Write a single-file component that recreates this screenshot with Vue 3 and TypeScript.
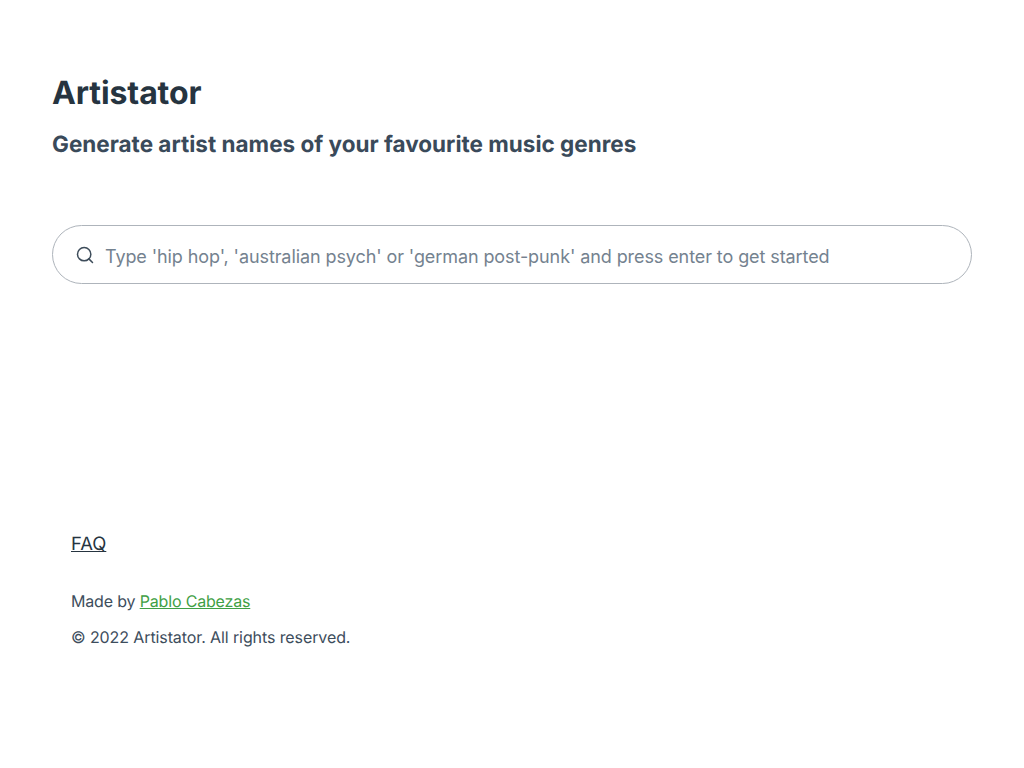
<script setup lang="ts">
const placeholder = "Type 'hip hop', 'australian psych' or 'german post-punk' and press enter to get started";
</script>

<template>
  <div class="page">
    <header class="head">
      <h1>Artistator</h1>
      <h2>Generate artist names of your favourite music genres</h2>
    </header>
    <div class="search">
      <svg class="icon" width="20" height="20" viewBox="0 0 24 24" fill="none" stroke="#3d4c5a" stroke-width="1.8" stroke-linecap="round" stroke-linejoin="round">
        <circle cx="11" cy="11" r="8" />
        <path d="M21 21l-4.35-4.35" />
      </svg>
      <input type="text" :placeholder="placeholder" />
    </div>
    <footer class="foot">
      <a class="faq" href="#">FAQ</a>
      <p class="made">Made by <a href="#">Pablo Cabezas</a></p>
      <p class="copy">© 2022 Artistator. All rights reserved.</p>
    </footer>
  </div>
</template>

<style>
html, body { background: #fff; }
</style>

<style scoped>
.page {
  padding: 73px 52px 0;
  font-family: Inter, "Liberation Sans", sans-serif;
  color: #3d4d5c;
  text-rendering: geometricPrecision;
}
.head h1 {
  margin: 0;
  font-size: 32px;
  line-height: 40px;
  font-weight: 700;
  color: #263440;
  letter-spacing: -0.1px;
}
.head h2 {
  margin: 18px 0 0;
  font-size: 22.5px;
  line-height: 28px;
  font-weight: 700;
  color: #3a4a5a;
}
.search {
  margin-top: 66px;
  height: 59px;
  box-sizing: border-box;
  border: 1px solid #aeb4bb;
  border-radius: 30px;
  display: flex;
  align-items: center;
  padding: 0 22px;
  gap: 10px;
}
.icon { flex: none; }
input {
  flex: 1;
  border: 0;
  outline: 0;
  padding: 4px 0 0;
  background: transparent;
  font: inherit;
  font-size: 18px;
  letter-spacing: -0.09px;
  color: #3d4d5c;
}
input::placeholder { color: #74828f; opacity: 1; }
.foot {
  margin-top: 247px;
  padding-left: 19px;
}
.faq {
  display: block;
  font-size: 18.4px;
  line-height: 26px;
  color: #263440;
  text-decoration: underline;
}
.made, .copy {
  margin: 0;
  font-size: 16px;
  line-height: 24px;
  letter-spacing: -0.1px;
}
.made { margin-top: 32px; letter-spacing: -0.17px; }
.copy { margin-top: 12px; }
.made a { color: #3fa045; text-decoration: underline; }
</style>
